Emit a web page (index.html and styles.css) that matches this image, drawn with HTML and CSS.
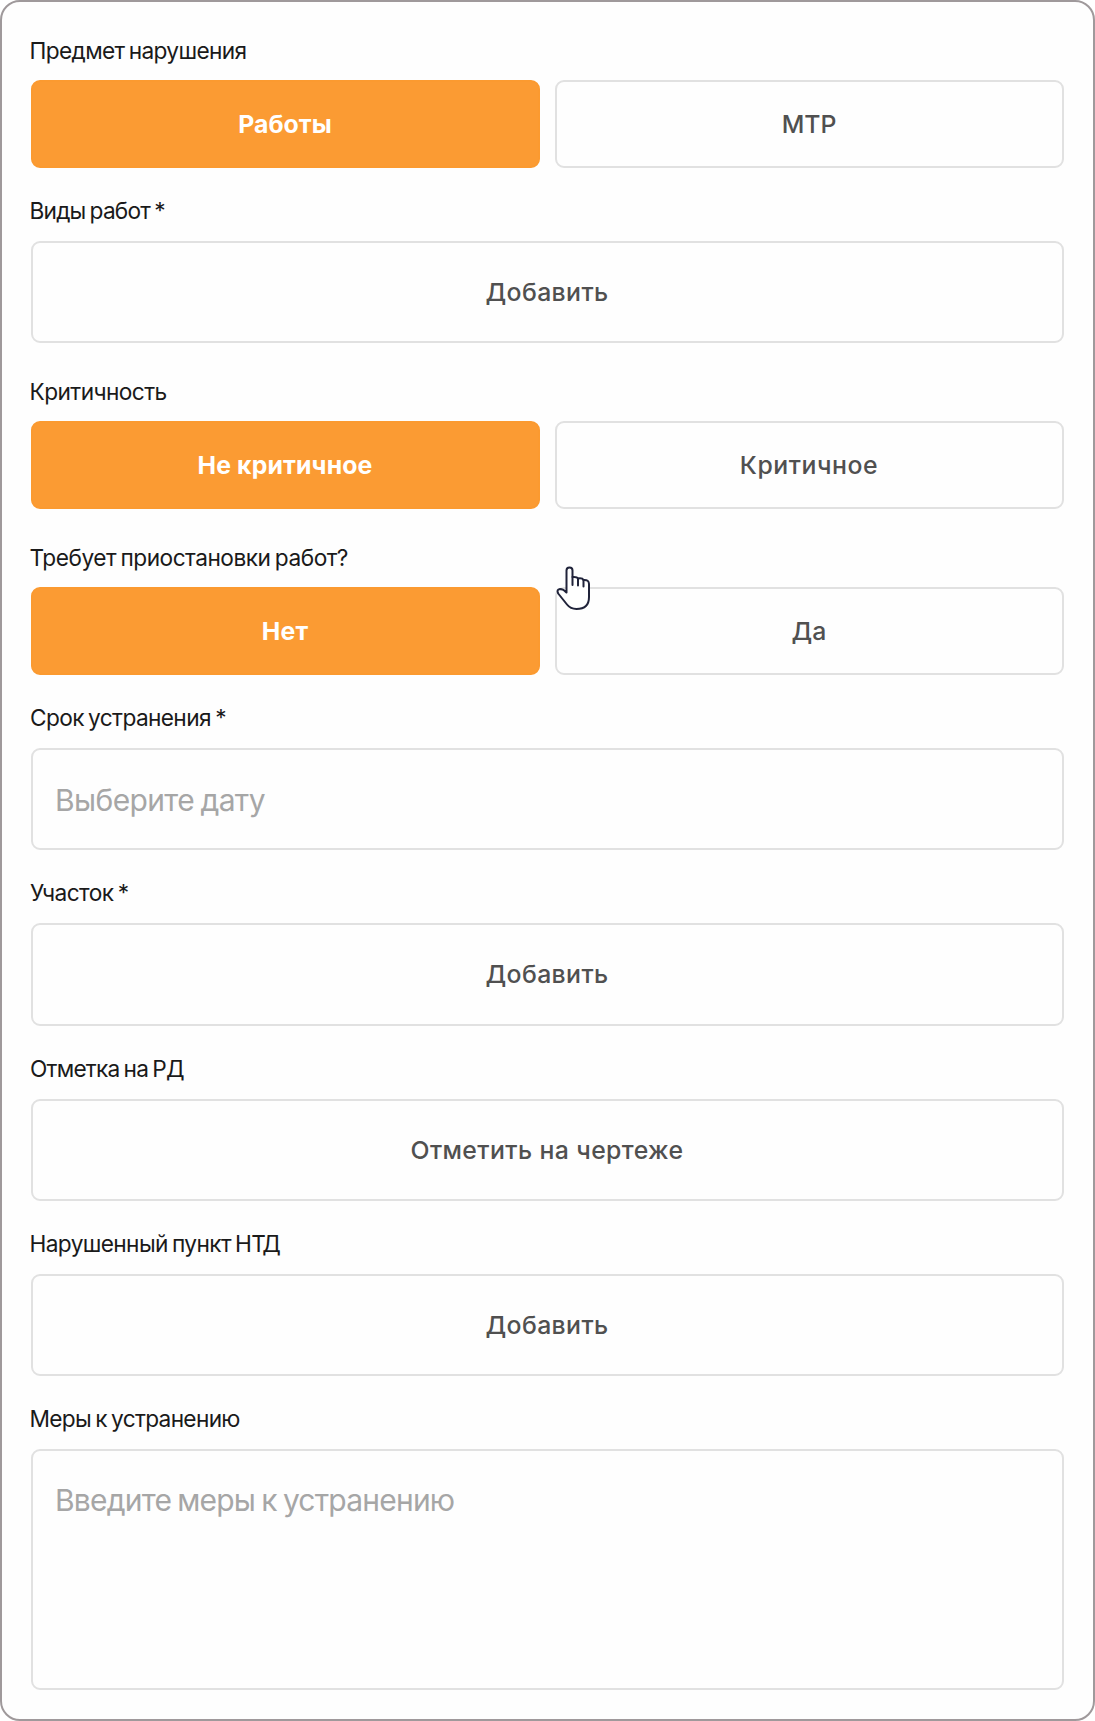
FILE: index.html
```html
<!DOCTYPE html>
<html lang="ru">
<head>
<meta charset="utf-8">
<title>Нарушение</title>
<link rel="stylesheet" href="styles.css">
</head>
<body>
<form class="card">
  <section class="field field-subject">
    <div class="label">Предмет нарушения</div>
    <div class="pair">
      <button type="button" class="option selected">Работы</button>
      <button type="button" class="option">МТР</button>
    </div>
  </section>
  <section class="field field-works">
    <div class="label">Виды работ *</div>
    <button type="button" class="box">Добавить</button>
  </section>
  <section class="field field-severity">
    <div class="label">Критичность</div>
    <div class="pair">
      <button type="button" class="option selected wide">Не критичное</button>
      <button type="button" class="option wider">Критичное</button>
    </div>
  </section>
  <section class="field field-pause">
    <div class="label">Требует приостановки работ?</div>
    <div class="pair">
      <button type="button" class="option selected wide">Нет</button>
      <button type="button" class="option">Да
        <svg class="pointer" viewBox="0 0 36 46" width="36" height="46" fill="#fff" stroke="#20233a" stroke-width="2" stroke-linejoin="round" stroke-linecap="round">
          <path d="M11.500 27.500V5.500Q11.500 2.500 14.500 2.500T17.500 5.500V12Q22 11.600 23 13.500Q27.500 12.800 28.500 15Q34 14.500 34 19V32Q34 44 21.500 44Q15.500 44 12 39.500L3.200 28.500Q1.200 24.500 5 24Q8.500 24 11.500 27.500Z"/>
          <path d="M17.500 12V20M23 13.500V20.500M28.500 15V21.500" fill="none"/>
        </svg>
      </button>
    </div>
  </section>
  <section class="field field-deadline">
    <div class="label">Срок устранения *</div>
    <div class="box input date">Выберите дату</div>
  </section>
  <section class="field field-area">
    <div class="label">Участок *</div>
    <button type="button" class="box">Добавить</button>
  </section>
  <section class="field field-mark">
    <div class="label">Отметка на РД</div>
    <button type="button" class="box">Отметить на чертеже</button>
  </section>
  <section class="field field-norm">
    <div class="label">Нарушенный пункт НТД</div>
    <button type="button" class="box">Добавить</button>
  </section>
  <section class="field field-actions">
    <div class="label">Меры к устранению</div>
    <div class="box input area">Введите меры к устранению</div>
  </section>
</form>
</body>
</html>
```
FILE: styles.css
```css
* { box-sizing: border-box; }

body {
  margin: 0;
  background: #fff;
  font-family: Inter, "Noto Sans", sans-serif;
}

.card {
  display: flex;
  flex-direction: column;
  gap: 29px;
  height: 1721px;
  padding: 34px 29px 0;
  border: 2px solid #9f999b;
  border-radius: 20px;
  background: #fefefe;
}

.field {
  display: flex;
  flex-direction: column;
  gap: 16px;
}

.label {
  height: 28px;
  margin-left: -1.5px;
  font-size: 22.7px;
  font-weight: 400;
  line-height: 28px;
  word-spacing: -1.5px;
  white-space: nowrap;
  color: #1a1a1a;
}

.field-subject .label { letter-spacing: -0.65px; }
.field-works .label { letter-spacing: -0.8px; }
.field-severity .label { letter-spacing: -0.58px; }
.field-pause .label { letter-spacing: -0.5px; }
.field-deadline .label { margin-left: -1px; letter-spacing: -0.63px; }
.field-area .label { margin-left: -1px; letter-spacing: -0.6px; }
.field-mark .label { margin-left: -1px; letter-spacing: -0.78px; }
.field-norm .label { letter-spacing: -0.64px; }
.field-actions .label { letter-spacing: -0.69px; }

.field-subject { gap: 15px; padding-top: 1px; }
.field-severity { gap: 14.7px; padding-top: 6px; }
.field-pause { gap: 15px; padding-top: 6px; }

.pair {
  display: grid;
  grid-template-columns: 1fr 1fr;
  gap: 15px;
}

.option,
.box {
  display: flex;
  align-items: center;
  justify-content: center;
  margin: 0;
  padding: 0 1px 0 0;
  border: 2px solid #e1e1e1;
  border-radius: 9px;
  background: #fefefe;
  color: #505050;
  font-family: inherit;
  font-size: 24.8px;
  font-weight: 500;
}

.option {
  position: relative;
  height: 88px;
  padding: 1px 1px 0 0;
}

.field-subject .option { padding-top: 0; }

.box {
  height: 102.3px;
  letter-spacing: 0.4px;
}

.selected {
  border-color: #fb9a30;
  background: #fb9b33;
  color: #fff;
  font-weight: 700;
}

.wide { letter-spacing: 0.15px; }
.wider { letter-spacing: 0.55px; }

.input {
  justify-content: flex-start;
  padding-left: 22px;
  color: #a6a6a6;
  font-size: 30px;
  font-weight: 400;
  line-height: 36px;
  letter-spacing: -0.79px;
  word-spacing: -1.5px;
}

.date { padding-top: 1px; letter-spacing: -0.62px; }

.area {
  align-items: flex-start;
  height: 240.5px;
  padding-top: 31px;
}

.pointer {
  position: absolute;
  left: -2px;
  top: -24px;
}
```
